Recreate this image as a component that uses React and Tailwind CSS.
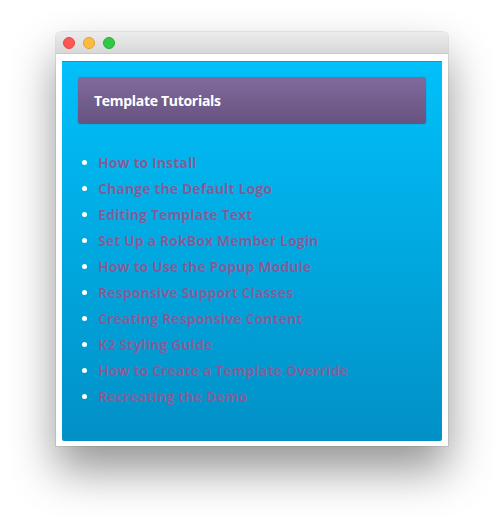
const tutorials = [
  'How to Install',
  'Change the Default Logo',
  'Editing Template Text',
  'Set Up a RokBox Member Login',
  'How to Use the Popup Module',
  'Responsive Support Classes',
  'Creating Responsive Content',
  'K2 Styling Guide',
  'How to Create a Template Override',
  'Recreating the Demo',
]

export default function App() {
  return (
    <div className="w-[504px] h-[527px] bg-white pt-[32px] pl-[56px]" style={{ fontFamily: '"Open Sans", "Liberation Sans", sans-serif' }}>
      <div className="w-[392px] h-[414px] bg-white rounded-t-[5px] shadow-[0_24px_45px_rgba(0,0,0,0.42),0_0_0_1px_rgba(0,0,0,0.08)] flex flex-col">
        <div className="h-[22px] rounded-t-[5px] bg-gradient-to-b from-[#ececec] to-[#d8d8d8] border-b border-[#c8c8c8] flex items-center gap-[8px] pl-[7px]">
          <span className="w-[12px] h-[12px] rounded-full bg-[#fc5753] border border-[#df4744]" />
          <span className="w-[12px] h-[12px] rounded-full bg-[#fdbc40] border border-[#de9f34]" />
          <span className="w-[12px] h-[12px] rounded-full bg-[#33c748] border border-[#27aa35]" />
        </div>
        <div className="flex-1 pt-[7px] px-[6px] pb-[5px]">
          <div className="h-full bg-gradient-to-b from-[#01c0fa] to-[#0190c6] border-t border-[#0a9ccc] rounded-b-[2px] px-[16px] pt-[15px]">
            <div className="h-[47px] rounded-[3px] bg-gradient-to-b from-[#7f6a9e] to-[#67537f] shadow-[0_0_1px_rgba(0,0,0,0.4)] flex items-center pl-[16px]">
              <h2 className="text-white font-bold text-[14px] tracking-[-0.3px]">Template Tutorials</h2>
            </div>
            <ul className="mt-[25px] pl-[4px]">
              {tutorials.map(t => (
                <li key={t} className="h-[26px] flex items-center gap-[11px]">
                  <span className="w-[5px] h-[5px] rounded-full bg-white" />
                  <span className="text-[#7a5c98] font-bold text-[14px] tracking-[0.1px] [text-shadow:0_0_1px_rgba(255,255,255,0.25)]">{t}</span>
                </li>
              ))}
            </ul>
          </div>
        </div>
      </div>
    </div>
  )
}
